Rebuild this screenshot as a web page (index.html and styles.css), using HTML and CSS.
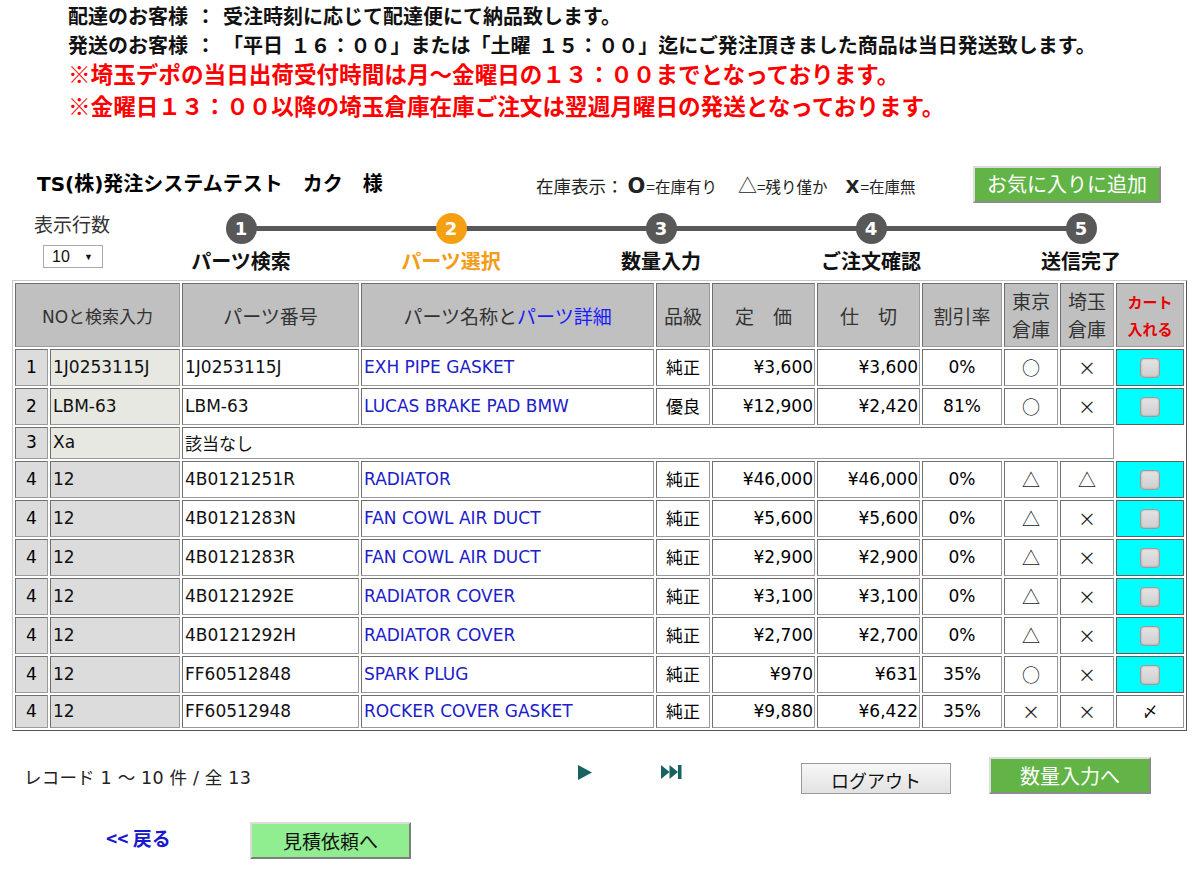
FILE: index.html
```html
<!DOCTYPE html>
<html lang="ja">
<head>
<meta charset="utf-8">
<title>パーツ選択</title>
<link rel="stylesheet" href="styles.css">
</head>
<body>
<div class="notice">
  <p class="n-line">配達のお客様 ： 受注時刻に応じて配達便にて納品致します。</p>
  <p class="n-line">発送のお客様 ： 「平日 １６：００」または「土曜 １５：００」迄にご発注頂きました商品は当日発送致します。</p>
  <p class="n-red">※埼玉デポの当日出荷受付時間は月～金曜日の１３：００までとなっております。</p>
  <p class="n-red">※金曜日１３：００以降の埼玉倉庫在庫ご注文は翌週月曜日の発送となっております。</p>
</div>

<div class="head-row">
  <div class="customer">TS(株)発注システムテスト　カク　様</div>
  <div class="legend">
    <span>在庫表示：</span><span class="sym">O</span><span class="sm">=在庫有り</span>
    <span class="tri">△</span><span class="sm">=残り僅か</span>
    <span class="sym x">X</span><span class="sm">=在庫無</span>
  </div>
  <button class="btn-green btn-fav" type="button">お気に入りに追加</button>
</div>

<div class="step-row">
  <div class="rows-ctl">
    <div class="rows-label">表示行数</div>
    <div class="rows-select"><span>10</span><span class="arr">▼</span></div>
  </div>
  <ol class="steps">
    <li class="step"><span class="dot">1</span><span class="lbl">パーツ検索</span></li>
    <li class="step current"><span class="dot">2</span><span class="lbl">パーツ選択</span></li>
    <li class="step"><span class="dot">3</span><span class="lbl">数量入力</span></li>
    <li class="step"><span class="dot">4</span><span class="lbl">ご注文確認</span></li>
    <li class="step"><span class="dot">5</span><span class="lbl">送信完了</span></li>
  </ol>
</div>

<table class="grid">
  <colgroup>
    <col class="w-no"><col class="w-in"><col class="w-pn"><col class="w-name"><col class="w-grade">
    <col class="w-price"><col class="w-price"><col class="w-rate"><col class="w-stock"><col class="w-stock"><col class="w-cart">
  </colgroup>
  <thead>
    <tr>
      <th colspan="2" class="th-small">NOと検索入力</th>
      <th>パーツ番号</th>
      <th>パーツ名称と<span class="lnk">パーツ詳細</span></th>
      <th>品級</th>
      <th>定　価</th>
      <th>仕　切</th>
      <th>割引率</th>
      <th class="two">東京<br>倉庫</th>
      <th class="two">埼玉<br>倉庫</th>
      <th class="cart-h">カート<br>入れる</th>
    </tr>
  </thead>
  <tbody>
    <tr>
      <td class="no">1</td><td class="in lt">1J0253115J</td><td class="pn">1J0253115J</td>
      <td class="nm">EXH PIPE GASKET</td><td class="c">純正</td>
      <td class="r">¥3,600</td><td class="r">¥3,600</td><td class="c">0%</td>
      <td class="c st">○</td><td class="c st">×</td><td class="cb"><input type="checkbox" aria-label="カート"></td>
    </tr>
    <tr>
      <td class="no">2</td><td class="in lt">LBM-63</td><td class="pn">LBM-63</td>
      <td class="nm">LUCAS BRAKE PAD BMW</td><td class="c">優良</td>
      <td class="r">¥12,900</td><td class="r">¥2,420</td><td class="c">81%</td>
      <td class="c st">○</td><td class="c st">×</td><td class="cb"><input type="checkbox" aria-label="カート"></td>
    </tr>
    <tr class="short">
      <td class="no">3</td><td class="in lt">Xa</td><td class="pn" colspan="8">該当なし</td>
    </tr>
    <tr>
      <td class="no">4</td><td class="in">12</td><td class="pn">4B0121251R</td>
      <td class="nm">RADIATOR</td><td class="c">純正</td>
      <td class="r">¥46,000</td><td class="r">¥46,000</td><td class="c">0%</td>
      <td class="c st">△</td><td class="c st">△</td><td class="cb"><input type="checkbox" aria-label="カート"></td>
    </tr>
    <tr>
      <td class="no">4</td><td class="in">12</td><td class="pn">4B0121283N</td>
      <td class="nm">FAN COWL AIR DUCT</td><td class="c">純正</td>
      <td class="r">¥5,600</td><td class="r">¥5,600</td><td class="c">0%</td>
      <td class="c st">△</td><td class="c st">×</td><td class="cb"><input type="checkbox" aria-label="カート"></td>
    </tr>
    <tr>
      <td class="no">4</td><td class="in">12</td><td class="pn">4B0121283R</td>
      <td class="nm">FAN COWL AIR DUCT</td><td class="c">純正</td>
      <td class="r">¥2,900</td><td class="r">¥2,900</td><td class="c">0%</td>
      <td class="c st">△</td><td class="c st">×</td><td class="cb"><input type="checkbox" aria-label="カート"></td>
    </tr>
    <tr>
      <td class="no">4</td><td class="in">12</td><td class="pn">4B0121292E</td>
      <td class="nm">RADIATOR COVER</td><td class="c">純正</td>
      <td class="r">¥3,100</td><td class="r">¥3,100</td><td class="c">0%</td>
      <td class="c st">△</td><td class="c st">×</td><td class="cb"><input type="checkbox" aria-label="カート"></td>
    </tr>
    <tr>
      <td class="no">4</td><td class="in">12</td><td class="pn">4B0121292H</td>
      <td class="nm">RADIATOR COVER</td><td class="c">純正</td>
      <td class="r">¥2,700</td><td class="r">¥2,700</td><td class="c">0%</td>
      <td class="c st">△</td><td class="c st">×</td><td class="cb"><input type="checkbox" aria-label="カート"></td>
    </tr>
    <tr>
      <td class="no">4</td><td class="in">12</td><td class="pn">FF60512848</td>
      <td class="nm">SPARK PLUG</td><td class="c">純正</td>
      <td class="r">¥970</td><td class="r">¥631</td><td class="c">35%</td>
      <td class="c st">○</td><td class="c st">×</td><td class="cb"><input type="checkbox" aria-label="カート"></td>
    </tr>
    <tr class="last">
      <td class="no">4</td><td class="in">12</td><td class="pn">FF60512948</td>
      <td class="nm">ROCKER COVER GASKET</td><td class="c">純正</td>
      <td class="r">¥9,880</td><td class="r">¥6,422</td><td class="c">35%</td>
      <td class="c st">×</td><td class="c st">×</td><td class="c mark">〆</td>
    </tr>
  </tbody>
</table>

<div class="pager-row">
  <div class="record">レコード 1 ～ 10 件 / 全 13</div>
  <svg class="ico-next" width="14" height="15" viewBox="0 0 14 15" aria-hidden="true"><path d="M0 0 L14 7.5 L0 15 Z"/></svg>
  <svg class="ico-last" width="21" height="14" viewBox="0 0 21 14" aria-hidden="true"><path d="M0 0 L8.5 7 L0 14 Z M8.5 0 L17 7 L8.5 14 Z"/><rect x="17" y="0" width="3.5" height="14"/></svg>
  <button class="btn-gray" type="button">ログアウト</button>
  <button class="btn-green btn-qty" type="button">数量入力へ</button>
</div>

<div class="nav-row">
  <a class="back" href="#">&lt;&lt; 戻る</a>
  <button class="btn-light" type="button">見積依頼へ</button>
</div>
</body>
</html>
```

FILE: styles.css
```css
* { box-sizing: border-box; }
html, body { margin: 0; padding: 0; background: #fff; }
body {
  width: 1200px;
  font-family: "DejaVu Sans", "Noto Sans CJK JP", sans-serif;
  color: #000;
}
p { margin: 0; }

/* notice */
.notice {
  height: 164px;
  padding: 1px 0 0 68px;
  font-family: "Noto Sans CJK JP", sans-serif;
  font-weight: 700;
}
.n-line { font-size: 20px; line-height: 29px; color: #111; word-spacing: 3px; white-space: nowrap; }
.n-red { font-size: 22.6px; line-height: 32px; color: #ff0000; white-space: nowrap; margin-top: -1px; }
.n-red + .n-red { margin-top: 0; }

/* head row */
.head-row { display: flex; align-items: center; height: 40px; }
.customer {
  width: 536px;
  padding-left: 37px;
  padding-bottom: 3px;
  font-size: 20px;
  font-weight: 700;
  font-family: "DejaVu Sans", "Noto Sans CJK JP", sans-serif;
  white-space: nowrap;
}
.legend {
  width: 437px;
  display: flex;
  align-items: baseline;
  font-family: "Noto Sans CJK JP", sans-serif;
  font-size: 17.5px;
  color: #222;
  white-space: nowrap;
  padding-top: 1px;
}
.legend .sym { font-family: "DejaVu Sans", sans-serif; font-weight: 700; font-size: 21px; margin: 0 1px 0 4px; }
.legend .x { margin-left: 18px; font-size: 18px; }
.legend .tri { font-size: 19px; margin-left: 21px; }
.legend .sm { font-size: 15.5px; }

.btn-green {
  background: #62b446;
  color: #fff;
  font-family: "Noto Sans CJK JP", sans-serif;
  font-size: 20px;
  border: 2px solid;
  border-color: #dcdcdc #8c8c8c #8c8c8c #dcdcdc;
  padding: 0;
  line-height: 1;
}
.btn-fav { width: 188px; height: 37px; }

/* step row */
.step-row { display: flex; height: 76px; }
.rows-ctl { width: 136px; padding-left: 34px; padding-top: 8px; }
.rows-label {
  font-family: "Noto Sans CJK JP", sans-serif;
  font-size: 19px;
  line-height: 24px;
  color: #333;
  white-space: nowrap;
}
.rows-select {
  margin: 9px 0 0 9px;
  width: 60px;
  height: 23px;
  border: 1px solid #a9a9a9;
  display: flex;
  align-items: center;
  justify-content: space-between;
  padding: 0 9px 0 8px;
  font-family: "Liberation Sans", sans-serif;
  font-size: 16px;
  color: #111;
}
.rows-select .arr { font-size: 9px; }

.steps {
  list-style: none;
  margin: 0;
  padding: 0;
  display: flex;
  width: 1050px;
  background: linear-gradient(#585858, #585858) no-repeat;
  background-size: 840px 5px;
  background-position: 105px 22px;
}
.step {
  width: 210px;
  display: flex;
  flex-direction: column;
  align-items: center;
}
.dot {
  margin-top: 9px;
  width: 31px;
  height: 31px;
  border-radius: 50%;
  background: #585858;
  color: #fff;
  font-family: "DejaVu Sans", sans-serif;
  font-weight: 700;
  font-size: 18px;
  display: flex;
  align-items: center;
  justify-content: center;
}
.lbl {
  margin-top: 5px;
  font-family: "Noto Sans CJK JP", sans-serif;
  font-weight: 700;
  font-size: 20px;
  line-height: 24px;
  color: #111;
  white-space: nowrap;
}
.step.current .dot { background: #f5a013; }
.step.current .lbl { color: #f39c17; }

/* table */
.grid {
  margin-left: 12px;
  width: 1175px;
  table-layout: fixed;
  border-collapse: separate;
  border-spacing: 2px;
  border: 1px solid;
  border-color: #c8c8c8 #555 #555 #c8c8c8;
}
.w-no { width: 33px; }
.w-in { width: 130px; }
.w-pn { width: 177px; }
.w-name { width: 293px; }
.w-grade { width: 54px; }
.w-price { width: 103px; }
.w-rate { width: 80px; }
.w-stock { width: 54px; }
.w-cart { width: 68px; }

.grid th, .grid td {
  border: 1px solid;
  border-color: #6f6f6f #9a9a9a #9a9a9a #6f6f6f;
  padding: 0 2px;
  white-space: nowrap;
  overflow: hidden;
}
.grid th {
  height: 64px;
  background: #c0c0c0;
  font-family: "Noto Sans CJK JP", sans-serif;
  font-weight: 400;
  font-size: 19px;
  color: #333;
  text-align: center;
  padding: 0;
}
.grid th.th-small { font-family: "DejaVu Sans", "Noto Sans CJK JP", sans-serif; font-size: 17px; }
.grid th .lnk { color: #1a1aff; }
.grid th.two { line-height: 28px; }
.grid th.cart-h { color: #e60000; font-weight: 700; font-size: 15px; line-height: 27px; }

.grid td {
  height: 37px;
  font-size: 17px;
  background: #fff;
  vertical-align: middle;
  padding-bottom: 2px;
}
.grid tr.short td { height: 32px; }
.grid tr.last td { height: 33px; }
.grid td.no { background: #dcdcdc; text-align: center; padding: 0 0 2px 0; }
.grid td.in { background: #dcdcdc; }
.grid td.in.lt { background: #e8e8e3; }
.grid td.nm { color: #2020c8; }
.grid td.c { text-align: center; padding: 0 0 2px 0; }
.grid td.r { text-align: right; padding: 0 1px 2px 0; }
.grid td.st { font-family: "Noto Sans CJK JP", sans-serif; font-size: 18px; color: #222; }
.grid td.pn, .grid td.in { color: #111; }
.grid td.cb {
  background: #00ffff;
  text-align: center;
  padding: 0;
  border-color: #5f5f5f;
}
.grid td.mark { font-family: "Noto Sans CJK JP", sans-serif; font-size: 15px; }
.grid td.cb input {
  appearance: none;
  -webkit-appearance: none;
  margin: 0;
  width: 20px;
  height: 20px;
  border-radius: 4px;
  border: 1px solid #9c9c9c;
  background: linear-gradient(#e4e4e4, #cfcfcf);
  box-shadow: inset 0 0 2px rgba(0, 0, 0, 0.3);
  vertical-align: middle;
}

/* pager row */
.pager-row {
  display: flex;
  align-items: flex-start;
  height: 63px;
  padding-top: 26px;
}
.record {
  width: 578px;
  padding-left: 24px;
  margin-top: 9px;
  font-family: "DejaVu Sans", "Noto Sans CJK JP", sans-serif;
  font-size: 17.5px;
  line-height: 24px;
  color: #222;
  white-space: nowrap;
  letter-spacing: 0.2px;
}
.ico-next { margin-top: 8px; fill: #176262; }
.ico-last { margin-top: 8px; margin-left: 69px; fill: #176262; }
.btn-gray {
  margin-top: 6px;
  margin-left: 119px;
  width: 150px;
  height: 31px;
  border: 1px solid #9a9a9a;
  background: linear-gradient(#f7f7f7, #e2e2e2);
  font-family: "Noto Sans CJK JP", sans-serif;
  font-size: 18px;
  color: #111;
  padding: 3px 0 0 0;
  line-height: 1;
}
.btn-qty { margin-left: 38px; width: 162px; height: 37px; }

/* nav row */
.nav-row { display: flex; align-items: center; margin-top: 28px; }
.back {
  width: 250px;
  padding-left: 106px;
  padding-bottom: 6px;
  color: #1a1acc;
  font-family: "Noto Sans CJK JP", sans-serif;
  font-weight: 700;
  font-size: 19px;
  text-decoration: none;
  white-space: nowrap;
}
.btn-light {
  width: 161px;
  height: 37px;
  background: #90ee90;
  border: 2px solid;
  border-color: #dcdcdc #7e7e7e #7e7e7e #dcdcdc;
  font-family: "Noto Sans CJK JP", sans-serif;
  font-size: 19px;
  color: #111;
  padding: 0;
  line-height: 1;
}
```
